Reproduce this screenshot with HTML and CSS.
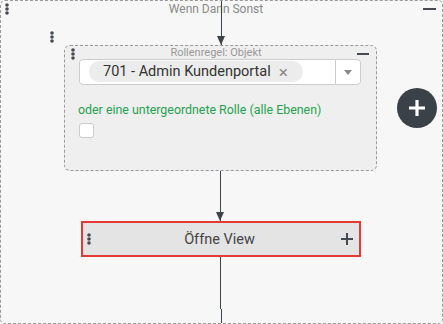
FILE: index.html
```html
<!DOCTYPE html>
<html lang="de">
<head>
    <meta charset="UTF-8">
    <title>Wenn Dann Sonst</title>
    <link rel="stylesheet" href="styles.css">
</head>
<body>

<div class="flow">
    <div class="flow-arrow"></div>

    <div class="flow-head">
        <svg class="dots" viewBox="0 0 4 12"><circle cx="2" cy="2" r="1.8"/><circle cx="2" cy="6" r="1.8"/><circle cx="2" cy="10" r="1.8"/></svg>
        <span class="flow-title">Wenn Dann Sonst</span>
        <span class="minus"></span>
    </div>

    <div class="branch">
        <svg class="dots branch-dots" viewBox="0 0 4 12"><circle cx="2" cy="2" r="1.8"/><circle cx="2" cy="6" r="1.8"/><circle cx="2" cy="10" r="1.8"/></svg>

        <div class="branch-col">
            <div class="rule">
                <div class="rule-head">
                    <svg class="dots" viewBox="0 0 4 12"><circle cx="2" cy="2" r="1.8"/><circle cx="2" cy="6" r="1.8"/><circle cx="2" cy="10" r="1.8"/></svg>
                    <span class="rule-title">Rollenregel: Objekt</span>
                    <span class="minus minus-small"></span>
                </div>

                <div class="select">
                    <div class="select-value">
                        <span class="chip">701 - Admin Kundenportal<span class="chip-x">&times;</span></span>
                    </div>
                    <div class="select-toggle"><span class="caret"></span></div>
                </div>

                <div class="rule-label">oder eine untergeordnete Rolle (alle Ebenen)</div>
                <div class="checkbox"></div>
            </div>

            <div class="connector"></div>

            <div class="action">
                <svg class="dots" viewBox="0 0 4 12"><circle cx="2" cy="2" r="1.8"/><circle cx="2" cy="6" r="1.8"/><circle cx="2" cy="10" r="1.8"/></svg>
                <span class="action-title">Öffne View</span>
                <svg class="action-plus" viewBox="0 0 12 12"><path d="M6 0v12M0 6h12" stroke="#454b52" stroke-width="2"/></svg>
            </div>

            <div class="tail">
                <div class="tail-top"></div>
                <div class="tail-bottom"></div>
            </div>
        </div>

        <button class="add-btn">
            <svg viewBox="0 0 18 18"><path d="M9 1v16M1 9h16" stroke="#fff" stroke-width="3.2"/></svg>
        </button>
    </div>
</div>

</body>
</html>
```

FILE: styles.css
```css
  body {
      margin: 0;
      background: #f7f7f7;
      font-family: Roboto, "Liberation Sans", sans-serif;
  }
  .flow {
      position: relative;
      width: 443px;
      height: 324px;
      box-sizing: border-box;
      border: 1px dashed #9a9a9a;
      border-radius: 5px;
      background: #f7f7f7;
      overflow: hidden;
  }
  /* arrow into the first rule, crosses the title */
  .flow-arrow {
      position: absolute;
      left: 219.5px;
      top: -1px;
      width: 1.5px;
      height: 45px;
      background: #3d434a;
  }
  .flow-arrow::after {
      content: "";
      position: absolute;
      left: -3.75px;
      bottom: 0;
      border-top: 9px solid #3d434a;
      border-left: 4.5px solid transparent;
      border-right: 4.5px solid transparent;
  }
  .dots {
      width: 4px;
      height: 12px;
      fill: #454b52;
      flex-shrink: 0;
  }
  .minus {
      width: 13px;
      height: 2px;
      margin-top: 5px;
      background: #454b52;
  }
  .minus-small {
      width: 12px;
  }
  .flow-head {
      display: flex;
      justify-content: space-between;
      align-items: flex-start;
      height: 18px;
      box-sizing: border-box;
      padding: 2px 6px 0 4px;
  }
  .flow-title {
      font-size: 12px;
      line-height: 12px;
      color: #8a8a8a;
  }
  .branch {
      display: flex;
      align-items: flex-start;
      padding-left: 49px;
  }
  .branch-dots {
      margin-top: 12px;
      margin-right: 10px;
  }
  .branch-col {
      width: 313px;
      margin-top: 26px;
      display: flex;
      flex-direction: column;
      align-items: center;
  }
  .rule {
      align-self: stretch;
      height: 126px;
      box-sizing: border-box;
      border: 1px dashed #9a9a9a;
      border-radius: 6px;
      background: #efefef;
  }
  .rule-head {
      display: flex;
      justify-content: space-between;
      align-items: flex-start;
      height: 13px;
      padding: 2px 7px 0 6px;
      box-sizing: border-box;
  }
  .rule-title {
      margin-top: -2px;
      font-size: 11px;
      line-height: 13px;
      color: #999;
  }
  .select {
      display: flex;
      height: 26px;
      box-sizing: border-box;
      margin: 0 15px 0 14px;
      border: 1px solid #ccc;
      border-radius: 4px;
      background: #fff;
  }
  .select-value {
      flex: 1;
      padding: 1px 9px;
  }
  .chip {
      display: inline-flex;
      align-items: center;
      height: 21px;
      padding: 0 15px 0 14px;
      border-radius: 11px;
      background: #ececec;
      font-size: 14.5px;
      color: #333;
  }
  .chip-x {
      margin-left: 8px;
      font-size: 17px;
      color: #888;
  }
  .select-toggle {
      width: 24px;
      border-left: 1px solid #ccc;
      display: flex;
      align-items: center;
      justify-content: center;
  }
  .caret {
      border-top: 5px solid #8a8a8a;
      border-left: 4.5px solid transparent;
      border-right: 4.5px solid transparent;
  }
  .rule-label {
      margin-top: 17px;
      padding-left: 13px;
      font-size: 12.4px;
      line-height: 16px;
      color: #1fa250;
  }
  .checkbox {
      width: 15px;
      height: 15px;
      box-sizing: border-box;
      margin: 5px 0 0 14px;
      border: 1px solid #ccc;
      border-radius: 3px;
      background: #fff;
  }
  .connector {
      position: relative;
      width: 1.5px;
      height: 50px;
      background: #3d434a;
  }
  .connector::after {
      content: "";
      position: absolute;
      left: -3.75px;
      bottom: 0;
      border-top: 9px solid #3d434a;
      border-left: 4.5px solid transparent;
      border-right: 4.5px solid transparent;
  }
  .action {
      display: grid;
      grid-template-columns: 1fr auto 1fr;
      align-items: center;
      width: 280px;
      height: 36px;
      box-sizing: border-box;
      padding: 0 6px 0 4px;
      border: 2px solid #e53935;
      background: #e4e4e4;
  }
  .action-title {
      font-size: 14.5px;
      color: #444;
  }
  .action-plus {
      width: 12px;
      height: 12px;
      justify-self: end;
  }
  .tail {
      display: flex;
      flex-direction: column;
  }
  .tail-top {
      width: 1.5px;
      height: 52px;
      background: #3d434a;
  }
  .tail-bottom {
      width: 1px;
      height: 16px;
      margin-left: 1px;
      background: #3d434a;
  }
  .add-btn {
      width: 40px;
      height: 40px;
      margin: 69px 0 0 20px;
      padding: 0;
      border: none;
      border-radius: 50%;
      background: #3b4148;
      display: flex;
      align-items: center;
      justify-content: center;
      cursor: pointer;
  }
  .add-btn svg {
      width: 18px;
      height: 18px;
  }
```
